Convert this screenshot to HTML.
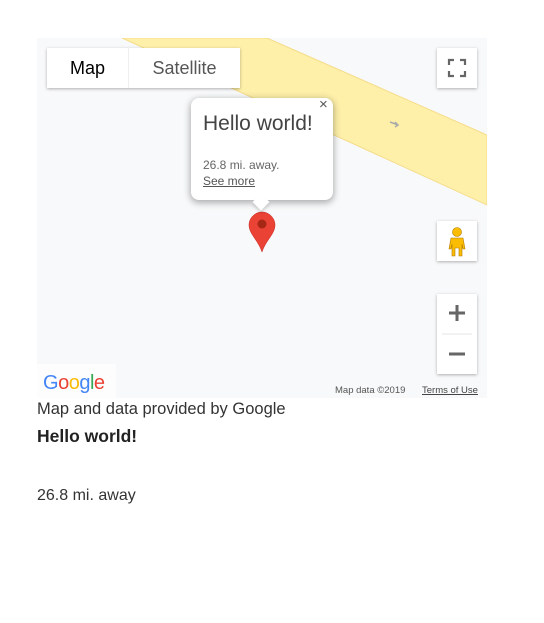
<!DOCTYPE html>
<html><head><style>
body{margin:0;width:544px;height:623px;background:#fff;font-family:"Liberation Sans",sans-serif;position:relative;overflow:hidden}
.map{position:absolute;left:37px;top:38px;width:450px;height:360px;background:#f8f9fa;overflow:hidden}
.a{position:absolute}
.ctl{background:#fff;box-shadow:0 1px 3px rgba(0,0,0,.3)}
.t{position:absolute;left:37px;color:#333;font-size:16.5px}
</style></head><body>
<div class="map">
<svg class="a" style="left:0;top:0" width="450" height="360">
<polygon points="85,0 230,0 450,97 450,167" fill="#fef0a9" stroke="#f6dc8a" stroke-width="1"/>
<path d="M353,84 l8,3 m-3,-3 l3,3 -3,2" stroke="#aaa" stroke-width="1.5" fill="none"/>
<path d="M225,212 c-7,0 -13,6 -13,13 c0,9 9,15 13,27 c4,-12 13,-18 13,-27 c0,-7 -6,-13 -13,-13z" transform="translate(0,-38)" fill="#ea4335" stroke="#c5221f" stroke-width=".5"/>
<circle cx="225" cy="186" r="4.5" fill="#a52714"/>
</svg>
<div class="a ctl" style="left:10px;top:10px;width:193px;height:40px;display:flex;font-size:18px">
<div style="width:81px;text-align:center;line-height:40px;color:#000;font-weight:500;border-right:1px solid #eee">Map</div>
<div style="flex:1;text-align:center;line-height:40px;color:#565656">Satellite</div></div>
<div class="a ctl" style="left:400px;top:10px;width:40px;height:40px">
<svg width="40" height="40"><path d="M12,17 v-5 h5 M23,12 h5 v5 M28,23 v5 h-5 M17,28 h-5 v-5" stroke="#666" stroke-width="2.2" fill="none"/></svg></div>
<div class="a ctl" style="left:400px;top:183px;width:40px;height:40px">
<svg width="40" height="40"><circle cx="20" cy="11" r="4.5" fill="#fbbc04" stroke="#b07a00" stroke-width=".6"/><path d="M14,17 h12 l2,11 h-2 l-1,-5 v12 h-3 v-8 h-4 v8 h-3 v-12 l-1,5 h-2z" fill="#fbbc04" stroke="#b07a00" stroke-width=".6"/></svg></div>
<div class="a ctl" style="left:400px;top:256px;width:40px;height:80px">
<svg width="40" height="80"><path d="M20,11 v16 M12,19 h16" stroke="#666" stroke-width="3"/><path d="M5,40 h30" stroke="#e6e6e6"/><path d="M12,60 h16" stroke="#666" stroke-width="3"/></svg></div>
<div class="a" style="left:0;top:326px;width:79px;height:34px;background:#fff;opacity:.7"></div>
<div class="a" style="left:6px;top:334px;font-size:20px;font-weight:500;letter-spacing:-.5px"><span style="color:#4285f4">G</span><span style="color:#ea4335">o</span><span style="color:#fbbc05">o</span><span style="color:#4285f4">g</span><span style="color:#34a853">l</span><span style="color:#ea4335">e</span></div>
<div class="a" style="left:298px;top:347px;font-size:9.5px;color:#555">Map data ©2019</div>
<div class="a" style="left:385px;top:347px;font-size:9.5px;color:#444;text-decoration:underline">Terms of Use</div>
<div class="a" style="left:154px;top:60px;width:142px;height:102px;background:#fff;border-radius:8px;box-shadow:0 2px 7px 1px rgba(0,0,0,.3)">
<div class="a" style="left:128px;top:-2px;font-size:15px;color:#555">×</div>
<div class="a" style="left:12px;top:14px;font-size:21px;color:#444;font-weight:300">Hello world!</div>
<div class="a" style="left:12px;top:60px;font-size:12px;color:#666">26.8 mi. away.</div>
<div class="a" style="left:12px;top:76px;font-size:12px;color:#555;text-decoration:underline">See more</div>
</div>
<div class="a" style="left:218px;top:158px;width:12px;height:12px;background:#fff;transform:rotate(45deg);box-shadow:2px 2px 3px rgba(0,0,0,.15)"></div>
</div>
<div class="t" style="top:400px">Map and data provided by Google</div>
<div class="t" style="top:426px;font-weight:bold;font-size:17.5px;color:#222">Hello world!</div>
<div class="t" style="top:487px;font-size:16px">26.8 mi. away</div>
</body></html>
